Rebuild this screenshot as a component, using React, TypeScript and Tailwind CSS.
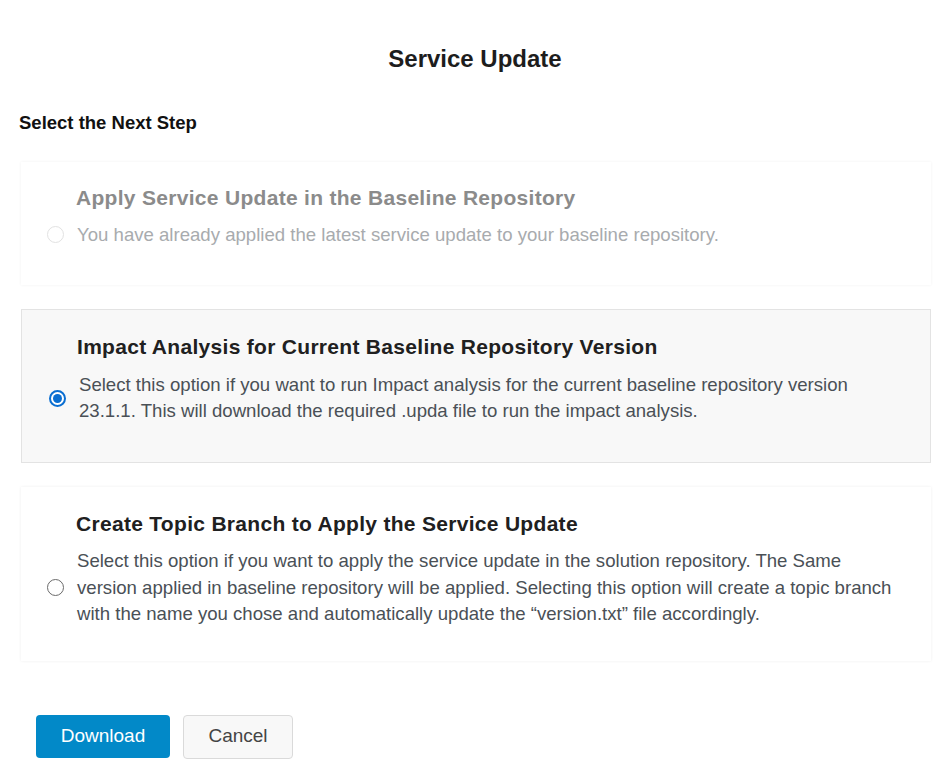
import React, { useState } from "react";

type Option = {
  id: string;
  title: string;
  text: string;
  disabled?: boolean;
};

const options: Option[] = [
  {
    id: "apply",
    title: "Apply Service Update in the Baseline Repository",
    text: "You have already applied the latest service update to your baseline repository.",
    disabled: true,
  },
  {
    id: "impact",
    title: "Impact Analysis for Current Baseline Repository Version",
    text: "Select this option if you want to run Impact analysis for the current baseline repository version 23.1.1. This will download the required .upda file to run the impact analysis.",
  },
  {
    id: "topic",
    title: "Create Topic Branch to Apply the Service Update",
    text: "Select this option if you want to apply the service update in the solution repository. The Same version applied in baseline repository will be applied. Selecting this option will create a topic branch with the name you chose and automatically update the \u201cversion.txt\u201d file accordingly.",
  },
];

const Radio = ({ checked, disabled }: { checked: boolean; disabled?: boolean }) => {
  if (checked) {
    return (
      <span className="flex h-[17px] w-[17px] shrink-0 items-center justify-center rounded-full border-2 border-[#0a6ed1] bg-white">
        <span className="h-[9px] w-[9px] rounded-full bg-[#0a6ed1]" />
      </span>
    );
  }
  return (
    <span
      className={
        disabled
          ? "h-[17px] w-[17px] shrink-0 rounded-full border-[1.5px] border-[#e2e2e2] bg-white"
          : "h-[17px] w-[17px] shrink-0 rounded-full border-[1.5px] border-[#6a6a6a] bg-white"
      }
    />
  );
};

export default function App() {
  const [selected, setSelected] = useState("impact");

  return (
    <div className="min-h-[783px] bg-white pt-[45px] font-['Liberation_Sans',Arial,sans-serif]">
      <h1 className="text-center text-[24px] font-bold leading-[28px] text-[#1d1d1d]">
        Service Update
      </h1>

      <div className="px-[19px]">
        <h2 className="mt-[40px] text-[18.5px] font-bold leading-[20px] text-[#111]">
          Select the Next Step
        </h2>

        <div className="mt-[29px] flex flex-col gap-[24px] pl-[2px]">
          {options.map((opt) => {
            const isSel = selected === opt.id;
            return (
              <div
                key={opt.id}
                onClick={() => !opt.disabled && setSelected(opt.id)}
                className={
                  isSel
                    ? "cursor-pointer border border-[#e3e3e3] bg-[#f8f8f8] pb-[37px] pl-[27px] pr-[27px] pt-[25px]"
                    : opt.disabled
                      ? "bg-white pb-[37px] pl-[26px] pr-[28px] pt-[24px] shadow-[0_0_3px_rgba(0,0,0,0.06)]"
                      : "cursor-pointer bg-white pb-[33px] pl-[26px] pr-[28px] pt-[25px] shadow-[0_0_3px_rgba(0,0,0,0.07)]"
                }
              >
                <div
                  className={
                    opt.disabled
                      ? "pl-[29px] text-[21px] font-bold leading-[24px] tracking-[0.3px] text-[#8b8b8b]"
                      : isSel
                        ? "pl-[28px] text-[21px] font-bold leading-[24px] tracking-[0.3px] text-[#202020]"
                        : "pl-[29px] text-[21px] font-bold leading-[24px] tracking-[0.3px] text-[#202020]"
                  }
                >
                  {opt.title}
                </div>
                <div
                  className={
                    opt.disabled
                      ? "mt-[11px] flex items-center gap-[13px]"
                      : "mt-[12.5px] flex items-center gap-[13px]"
                  }
                >
                  <Radio checked={isSel} disabled={opt.disabled} />
                  <p
                    className={
                      opt.disabled
                        ? "text-[18.6px] leading-[27px] text-[#a8abae]"
                        : "text-[18.6px] leading-[26.5px] text-[#4a5056]"
                    }
                  >
                    {opt.text}
                  </p>
                </div>
              </div>
            );
          })}
        </div>

        <div className="mt-[54px] flex gap-[13px] pl-[17px]">
          <button className="h-[43px] w-[134px] rounded-[4px] bg-[#0289c8] text-[19px] text-white">
            Download
          </button>
          <button className="h-[44px] w-[110px] rounded-[4px] border border-[#dadada] bg-[#f8f8f8] text-[19px] text-[#444]">
            Cancel
          </button>
        </div>
      </div>
    </div>
  );
}
